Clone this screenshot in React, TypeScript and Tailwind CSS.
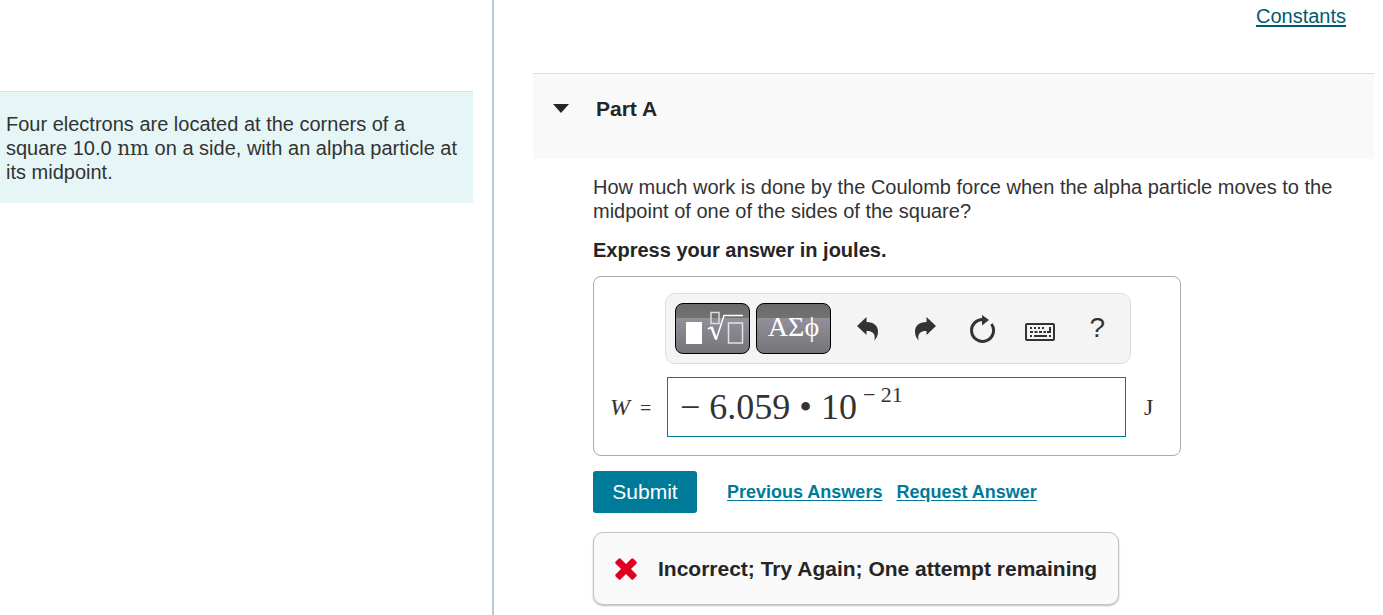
import React, { useState } from 'react';

interface ToolButtonProps {
    label: string;
    children: React.ReactNode;
}

function IconButton({ label, children }: ToolButtonProps) {
    return (
        <button type="button" aria-label={label} title={label} className="flex h-12 flex-1 items-center justify-center text-[#333]">
            {children}
        </button>
    );
}

function PaletteButton({ label, children }: ToolButtonProps) {
    return (
        <button
            type="button"
            aria-label={label}
            title={label}
            className="flex h-[51px] w-[75px] shrink-0 items-center justify-center rounded-lg border border-black bg-[linear-gradient(to_bottom,#6a6a6a_0%,#727272_28%,#92909b_28%,#757579_100%)] text-white"
        >
            {children}
        </button>
    );
}

function Toolbar() {
    return (
        <div role="toolbar" aria-label="Equation editor" className="flex h-[71px] w-[466px] max-w-full items-center rounded-[10px] border border-[#ddd] bg-[#f4f4f4] pl-[9px] pr-1">
            <div className="flex gap-1.5">
                <PaletteButton label="Templates">
                    <svg width="73" height="49" viewBox="0 0 73 49" fill="none" stroke="#fff">
                        <rect x="10" y="18" width="16" height="22" fill="#fff" stroke="none" />
                        <rect x="35" y="8.500" width="8" height="11" stroke="#ddd" strokeWidth="1.500" />
                        <path d="M32 25l3.500-2" strokeWidth="1.500" />
                        <path d="M35.500 23l4.500 12" strokeWidth="2.500" />
                        <path d="M40 36l8-24.500h19" strokeWidth="1.500" />
                        <rect x="52.500" y="19" width="14" height="20" stroke="#e4e4e4" strokeWidth="1.500" />
                    </svg>
                </PaletteButton>
                <PaletteButton label="Symbols">
                    <span className="pb-1 font-['Liberation_Serif',serif] text-[28px] leading-8">ΑΣϕ</span>
                </PaletteButton>
            </div>
            <div className="flex flex-1 pl-2">
                <IconButton label="Undo">
                    <svg width="22" height="26" viewBox="0 0 22 26" fill="currentColor">
                        <path d="M0 10L9.500 1v5C17 6 21 10 21 15.500c0 3.500-1 6-3.500 9 1-7-1.500-9.500-8-9.500v4z" />
                    </svg>
                </IconButton>
                <IconButton label="Redo">
                    <svg width="22" height="26" viewBox="0 0 22 26" fill="currentColor">
                        <path d="M22 10L12.500 1v5C5 6 1 10 1 15.500c0 3.500 1 6 3.500 9-1-7 1.500-9.500 8-9.500v4z" />
                    </svg>
                </IconButton>
                <IconButton label="Reset">
                    <svg width="26" height="28" viewBox="0 0 26 28" fill="none">
                        <path d="M14 4.500A11 11 0 1 0 21.500 9" stroke="currentColor" strokeWidth="3" />
                        <path d="M12 0l7 5-7 5.500z" fill="currentColor" />
                    </svg>
                </IconButton>
                <IconButton label="Keyboard shortcuts">
                    <svg width="30" height="28" viewBox="0 0 30 28" fill="none" stroke="currentColor" strokeWidth="2">
                        <rect x="1" y="9" width="28" height="16" rx="1" />
                        <path d="M5 13h16" strokeDasharray="2 2" />
                        <path d="M5 17h16" strokeDasharray="3 1.500" />
                        <path d="M5 21h2M9 21h13M24 21h2" />
                        <path d="M25 12v5h-3" />
                    </svg>
                </IconButton>
                <IconButton label="Help">
                    <span className="pb-0.5 text-[28px] leading-8">?</span>
                </IconButton>
            </div>
        </div>
    );
}

function AnswerBox() {
    const [base, setBase] = useState('− 6.059 • 10');
    const [exponent, setExponent] = useState('− 21');

    return (
        <div className="flex w-[588px] max-w-full flex-col gap-[13px] rounded-lg border border-[#a9a9a9] px-4 pt-4 pb-[18px]">
            <div className="pl-[55px]">
                <Toolbar />
            </div>
            <div className="flex items-center font-['Liberation_Serif',serif] text-2xl text-[#333]">
                <label htmlFor="answer" className="w-[57px] shrink-0">
                    <i>W</i> <span className="pl-1 text-xl">=</span>
                </label>
                <div className="flex h-[60px] w-[459px] items-center border border-[#007a99] pl-3">
                    <input
                        id="answer"
                        value={base}
                        onChange={(e) => setBase(e.target.value)}
                        className="field-sizing-content text-4xl outline-none"
                    />
                    <input
                        aria-label="Exponent"
                        value={exponent}
                        onChange={(e) => setExponent(e.target.value)}
                        className="mb-6 min-w-0 flex-1 pl-1.5 text-[22px] leading-6 outline-none"
                    />
                </div>
                <span className="pl-[18px]">J</span>
            </div>
        </div>
    );
}

export default function App() {
    const [open, setOpen] = useState(true);

    return (
        <div className="flex min-h-screen bg-white font-['Liberation_Sans',Arial,sans-serif] text-xl leading-6 text-[#333]">
            <aside className="w-[494px] shrink-0 border-r-2 border-[#b8c9db] pt-[91px] pr-[19px]">
                <p className="border-t border-[#d8e4e4] bg-[#e6f6f7] pt-5 pr-1 pb-[19px] pl-1.5">
                    Four electrons are located at the corners of a square 10.0 <span className="font-['DejaVu_Serif',serif] leading-5">nm</span> on a side, with an alpha particle at its midpoint.
                </p>
            </aside>

            <main className="min-w-0 flex-1 pt-1 pr-[9px] pb-2.5 pl-[39px]">
                <div className="flex justify-end pr-7">
                    <a href="#constants" className="text-[#005a70] underline underline-offset-2">Constants</a>
                </div>

                <section className="mt-[45px]">
                    <h2 className="border-t border-[#ddd] bg-[#f9f9f9] pt-[23px] pb-[38px] pl-5 text-[21px] leading-6 font-bold text-[#252525]">
                        <button type="button" aria-expanded={open} onClick={() => setOpen(!open)} className="flex items-center gap-[27px]">
                            <svg width="16" height="10" viewBox="0 0 16 10" fill="currentColor">
                                <path d="M0 0h16L8 9z" />
                            </svg>
                            Part A
                        </button>
                    </h2>

                    {open && (
                        <div className="pt-4 pr-5 pl-[60px]">
                            <p>How much work is done by the Coulomb force when the alpha particle moves to the midpoint of one of the sides of the square?</p>
                            <p className="mt-[15px] mb-3.5 font-bold text-[#252525]">Express your answer in joules.</p>

                            <AnswerBox />

                            <div className="mt-[15px] flex items-center text-lg font-bold text-[#007a99]">
                                <button type="submit" className="h-[42px] w-[104px] rounded-[3px] bg-[#007a99] text-[21px] font-normal text-white">Submit</button>
                                <a href="#previous" className="ml-[30px] underline underline-offset-2">Previous Answers</a>
                                <a href="#request" className="ml-3.5 underline underline-offset-2">Request Answer</a>
                            </div>

                            <div role="status" className="mt-[19px] flex h-[73px] w-[526px] max-w-full items-center gap-[21px] rounded-[10px] border border-[#c4c4c4] bg-[#f9f9f9] pl-[21px] text-[21px] leading-6 font-bold text-[#252525] shadow-[0_1px_2px_#bbb]">
                                <svg width="22" height="22" viewBox="0 0 22 22" className="shrink-0" fill="#e0001f">
                                    <rect x="-1.500" y="7.500" width="25" height="7" rx="1.500" transform="rotate(45 11 11)" />
                                    <rect x="-1.500" y="7.500" width="25" height="7" rx="1.500" transform="rotate(-45 11 11)" />
                                </svg>
                                <span>Incorrect; Try Again; One attempt remaining</span>
                            </div>
                        </div>
                    )}
                </section>
            </main>
        </div>
    );
}
